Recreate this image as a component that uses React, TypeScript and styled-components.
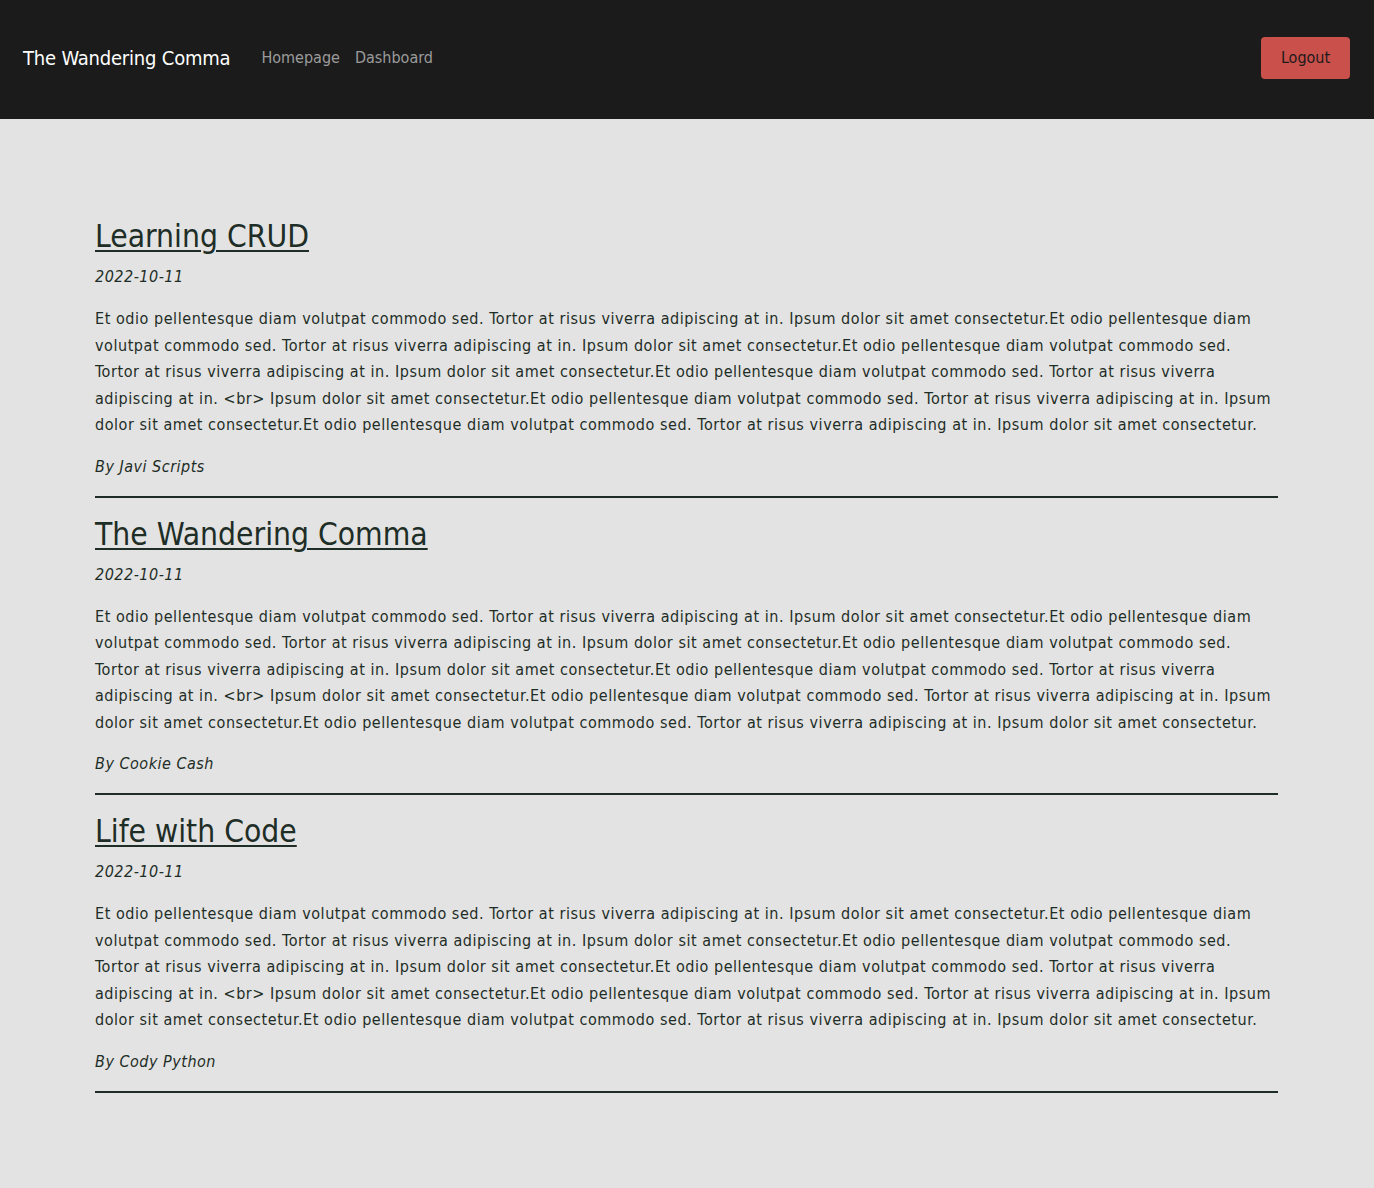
import React from "react";
import styled, { createGlobalStyle } from "styled-components";

const Global = createGlobalStyle`
  html, body { margin: 0; padding: 0; background: #e3e3e3; }
  body { font-family: "DejaVu Sans Condensed", "DejaVu Sans", sans-serif; color: #1e2d26; }
  * { box-sizing: border-box; }
`;

const Nav = styled.header`
  height: 119px;
  background: #1b1b1b;
  display: flex;
  align-items: center;
  padding: 0 24px 4px 23px;
`;

const Brand = styled.a`
  color: #ffffff;
  font-size: 20px;
  letter-spacing: -0.2px;
  text-decoration: none;
  margin-right: 31px;
`;

const NavLinks = styled.nav`
  display: flex;
  gap: 15px;
  flex: 1;
`;

const NavLink = styled.a`
  color: #9b9b9b;
  font-size: 16px;
  text-decoration: none;
`;

const LogoutButton = styled.button`
  background: #c9504b;
  color: #1b1b1b;
  border: none;
  border-radius: 4px;
  width: 89px;
  height: 42px;
  font-family: inherit;
  font-size: 16px;
  cursor: pointer;
`;

const Main = styled.main`
  padding: 81px 96px 80px 95px;
`;

const Article = styled.article`
  display: flex;
  flex-direction: column;
  border-bottom: 2px solid #1e2d26;
`;

const Title = styled.a`
  font-size: 31.5px;
  color: #1e2d26;
  text-decoration: underline;
  text-underline-offset: 3px;
  text-decoration-thickness: 2px;
  align-self: flex-start;
  line-height: 38px;
  margin-top: 17px;
`;

const DateText = styled.p`
  font-style: italic;
  font-size: 16px;
  letter-spacing: 0.5px;
  margin: 10px 0 0;
  line-height: 24px;
`;

const Body = styled.p`
  font-size: 16px;
  letter-spacing: 0.55px;
  line-height: 26.5px;
  margin: 17px 0 0;
`;

const Author = styled.p`
  font-style: italic;
  font-size: 16px;
  letter-spacing: 0.5px;
  line-height: 24px;
  margin: 16px 0 17px;
`;

const TEXT =
  "Et odio pellentesque diam volutpat commodo sed. Tortor at risus viverra adipiscing at in. Ipsum dolor sit amet consectetur.Et odio pellentesque diam volutpat commodo sed. Tortor at risus viverra adipiscing at in. Ipsum dolor sit amet consectetur.Et odio pellentesque diam volutpat commodo sed. Tortor at risus viverra adipiscing at in. Ipsum dolor sit amet consectetur.Et odio pellentesque diam volutpat commodo sed. Tortor at risus viverra adipiscing at in. <br> Ipsum dolor sit amet consectetur.Et odio pellentesque diam volutpat commodo sed. Tortor at risus viverra adipiscing at in. Ipsum dolor sit amet consectetur.Et odio pellentesque diam volutpat commodo sed. Tortor at risus viverra adipiscing at in. Ipsum dolor sit amet consectetur.";

const posts = [
  { title: "Learning CRUD", author: "Javi Scripts" },
  { title: "The Wandering Comma", author: "Cookie Cash" },
  { title: "Life with Code", author: "Cody Python" },
];

export default function App() {
  return (
    <>
      <Global />
      <Nav>
        <Brand href="#">The Wandering Comma</Brand>
        <NavLinks>
          <NavLink href="#">Homepage</NavLink>
          <NavLink href="#">Dashboard</NavLink>
        </NavLinks>
        <LogoutButton>Logout</LogoutButton>
      </Nav>
      <Main>
        {posts.map((p) => (
          <Article key={p.title}>
            <Title href="#">{p.title}</Title>
            <DateText>2022-10-11</DateText>
            <Body>{TEXT}</Body>
            <Author>By {p.author}</Author>
          </Article>
        ))}
      </Main>
    </>
  );
}
